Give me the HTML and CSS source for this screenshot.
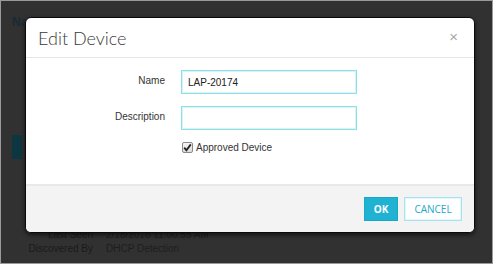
FILE: index.html
```html
<!DOCTYPE html>
<html>
<head>
<meta charset="utf-8">
<link rel="stylesheet" href="styles.css">
</head>
<body>
<div class="frame">
  <div class="page">
    <div class="top-row"><span class="top-label">Name</span><span class="top-value">LAP-20174</span></div>
    <div class="teal-bar"></div>
    <div class="info-rows">
      <div class="info-row"><span class="info-label">Last Seen</span><span class="info-value">2/18/2016 11:00:55 AM</span></div>
      <div class="info-row"><span class="info-label">Discovered By</span><span class="info-value">DHCP Detection</span></div>
    </div>
  </div>
  <div class="modal">
    <div class="modal-header">
      <span class="modal-title">Edit Device</span>
      <span class="close">&times;</span>
    </div>
    <div class="modal-body">
      <div class="form-grid">
        <label class="field-label">Name</label>
        <div class="input filled">LAP-20174</div>
        <label class="field-label">Description</label>
        <div class="input"></div>
        <span></span>
        <div class="check-row">
          <span class="checkbox"><svg width="9" height="9" viewBox="0 0 9 9"><path d="M1.2 4.6 L3.4 7.2 L7.8 1.4" fill="none" stroke="#222" stroke-width="1.8"/></svg></span>
          <span class="check-text">Approved Device</span>
        </div>
      </div>
    </div>
    <div class="modal-footer">
      <button class="btn btn-ok">OK</button>
      <button class="btn btn-cancel">CANCEL</button>
    </div>
  </div>
</div>
</body>
</html>
```
FILE: styles.css
```css
* { box-sizing: border-box; }
html, body { margin: 0; padding: 0; }
body { width: 493px; height: 264px; overflow: hidden; font-family: "Liberation Sans", Arial, sans-serif; }
.frame {
  position: relative;
  width: 493px;
  height: 264px;
  background: #313131;
  border: 1px solid #9a9a9a;
  overflow: hidden;
}
.page {
  display: flex;
  flex-direction: column;
  padding: 14px 0 0 11px;
  height: 100%;
}
.top-row { display: flex; gap: 40px; font-size: 12px; color: #1b2a33; font-weight: bold; }
.top-value { color: #222; font-weight: normal; margin-left: 40px; }
.teal-bar {
  width: 10px;
  height: 24px;
  margin-top: 106px;
  background: #0c3640;
}
.info-rows {
  margin-top: 70px;
  display: flex;
  flex-direction: column;
  gap: 2px;
}
.info-row { display: flex; gap: 13px; font-size: 10px; line-height: 12px; }
.info-label { width: 81px; text-align: right; color: #1a1a1a; }
.info-value { color: #1e1e1e; }

.modal {
  position: absolute;
  left: 24px;
  top: 16px;
  width: 450px;
  height: 216px;
  background: #fff;
  border: 1px solid #0a0a0a;
  border-radius: 6px;
  box-shadow: 0 2px 4px rgba(0,0,0,0.6);
  display: flex;
  flex-direction: column;
  overflow: hidden;
}
.modal-header {
  height: 40px;
  border-bottom: 1px solid #e6e6e6;
  display: flex;
  align-items: center;
  justify-content: space-between;
  padding: 0 16px 0 12px;
}
.modal-title {
  font-family: "Lato", "Open Sans", sans-serif;
  font-weight: 300;
  font-size: 18px;
  color: #3a3a3a;
}
.close { font-size: 15px; color: #a8a8a8; line-height: 1; margin-top: -3px; }
.modal-body { flex: 1; padding-top: 12px; }
.form-grid {
  display: grid;
  grid-template-columns: 139px 176px;
  column-gap: 16px;
  row-gap: 12px;
  font-size: 10px;
  color: #333;
}
.field-label { text-align: right; padding-top: 5px; }
.input {
  height: 24px;
  border: 1px solid #8fdfe8;
  box-shadow: inset 0 0 0 1px #d9f4f7;
  padding: 6px 6px;
  color: #222;
  font-size: 10px;
}
.check-row { display: flex; align-items: center; gap: 3px; margin-left: 1px; }
.checkbox {
  width: 11px;
  height: 11px;
  border: 1px solid #8a8a8a;
  border-radius: 2px;
  background: linear-gradient(#f4f4f4, #dcdcdc);
  display: flex;
  align-items: center;
  justify-content: center;
}
.check-text { color: #333; }
.modal-footer {
  height: 48px;
  background: #f3f3f3;
  border-top: 2px solid #e8e8e8;
  display: flex;
  justify-content: flex-end;
  align-items: flex-start;
  padding: 11px 12px 0 0;
  gap: 6px;
}
.btn {
  height: 24px;
  font-family: "Open Sans", "Liberation Sans", sans-serif;
  font-size: 10px;
  padding: 0;
  cursor: pointer;
}
.btn-ok {
  width: 34px;
  background: #20b2d3;
  border: 1px solid #1aa6c6;
  color: #fff;
  font-weight: bold;
}
.btn-cancel {
  width: 58px;
  background: #fff;
  border: 1px solid #a5e3ef;
  box-shadow: inset 0 0 0 1px #e3f6fa;
  color: #23a9c9;
}
```
